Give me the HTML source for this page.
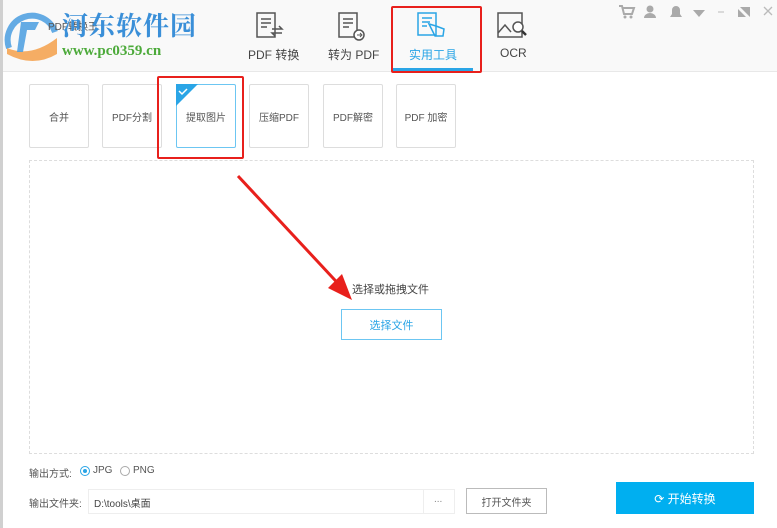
<!DOCTYPE html>
<html><head><meta charset="utf-8"><style>
*{margin:0;padding:0;box-sizing:border-box}
body{width:777px;height:528px;background:#fff;position:relative;overflow:hidden;font-family:"Liberation Sans","Noto Sans CJK SC",sans-serif;color:#333}
.a{position:absolute}
.card{position:absolute;top:84px;width:60px;height:64px;border:1px solid #ddd;border-radius:2px;font-size:10px;color:#555;display:flex;align-items:center;justify-content:center;background:#fff}
.tab{position:absolute;top:46px;font-size:12px;color:#444;text-align:center}
</style></head><body>
<div class="a" style="left:0;top:0;width:3px;height:528px;background:#d0d0d0"></div>
<div class="a" style="left:3px;top:0;width:774px;height:72px;background:#f9f9f9;border-bottom:1px solid #e8e8e8"></div>
<!-- logo -->
<svg class="a" style="left:3px;top:8px" width="56" height="56"><path d="M6 40A24 24 0 1 1 52 24" fill="none" stroke="#4a9ee0" stroke-width="6" opacity=".85"/><path d="M4 40q24 10 50-10v16q-24 14-50 0z" fill="#f5a04a" opacity=".85"/><path d="M18 14h18l-4 8H24l-4 22h-6z" fill="#4a9ee0" opacity=".85"/></svg>
<div class="a" style="left:48px;top:18px;font-size:10px;color:#555">PDF转换王</div>
<div class="a" style="left:62px;top:6px;font-size:26px;font-weight:bold;color:#3a8fd8;font-family:'Liberation Serif','Noto Serif CJK SC',serif;letter-spacing:1px">河东软件园</div>
<div class="a" style="left:62px;top:43px;font-size:15px;font-weight:bold;color:#4caa3a;font-family:'Liberation Serif',serif">www.pc0359.cn</div>
<!-- tabs -->
<svg class="a" style="left:254px;top:11px" width="34" height="30"><rect x="3" y="2" width="18" height="24" fill="none" stroke="#555" stroke-width="1.5"/><path d="M7 8h10M7 12h10M7 16h6M18 18h10l-3-3M28 22h-10l3 3" fill="none" stroke="#555" stroke-width="1.5"/></svg>
<div class="tab" style="left:248px">PDF 转换</div>
<svg class="a" style="left:336px;top:11px" width="30" height="32"><rect x="3" y="2" width="18" height="24" fill="none" stroke="#555" stroke-width="1.5"/><path d="M7 8h10M7 12h10M7 16h6" stroke="#555" stroke-width="1.5"/><circle cx="23" cy="24" r="5" fill="#fff" stroke="#555" stroke-width="1.5"/><path d="M21 24h4M24 22l2 2-2 2" fill="none" stroke="#555"/></svg>
<div class="tab" style="left:328px">转为 PDF</div>
<svg class="a" style="left:415px;top:11px" width="34" height="30"><rect x="3" y="2" width="18" height="22" fill="none" stroke="#2aa5e6" stroke-width="1.5"/><path d="M7 7h10M7 11h8M7 15h5M14 13l6 12h8l1-7-8-3z" fill="none" stroke="#2aa5e6" stroke-width="1.5"/></svg>
<div class="tab" style="left:409px;color:#2aa5e6">实用工具</div>
<div class="a" style="left:393px;top:68px;width:80px;height:3px;background:#2aa5e6"></div>
<div class="a" style="left:391px;top:6px;width:91px;height:67px;border:2px solid #e8201c;border-radius:2px"></div>
<svg class="a" style="left:496px;top:11px" width="34" height="30"><rect x="2" y="2" width="24" height="24" fill="none" stroke="#555" stroke-width="1.5"/><path d="M2 22l7-8 6 7" fill="none" stroke="#555" stroke-width="1.5"/><circle cx="22" cy="16" r="5" fill="#fff" stroke="#555" stroke-width="1.5"/><path d="M26 20l4 4" stroke="#333" stroke-width="2.5"/></svg>
<div class="tab" style="left:500px">OCR</div>
<!-- window controls -->
<svg class="a" style="left:618px;top:4px" width="18" height="16" fill="#aaa"><path d="M1 2h3l2 8h8l2-6H5" fill="none" stroke="#aaa" stroke-width="2"/><circle cx="7" cy="13" r="1.5"/><circle cx="13" cy="13" r="1.5"/></svg>
<svg class="a" style="left:640px;top:4px" width="137" height="16" fill="#aaa"><circle cx="10" cy="5" r="3.5"/><path d="M4 14a6 5 0 0 1 12 0z"/><path d="M30 13h12l-2-3v-4a4 4 0 0 0-8 0v4z"/><path d="M53 3h12M53 6h12l-6 7z"/><path d="M78 8h6" stroke="#bbb"/><path d="M100 3h10v10z"/><path d="M98 5v8h8z"/><path d="M124 3l8 8M132 3l-8 8" stroke="#bbb" stroke-width="1.3"/></svg>
<!-- cards -->
<div class="card" style="left:29px">合并</div>
<div class="card" style="left:102px">PDF分割</div>
<div class="card" style="left:176px;border-color:#6cc6f2">提取图片</div>
<svg class="a" style="left:176px;top:84px" width="22" height="22"><path d="M0 0h22L0 22z" fill="#2aa5e6"/><path d="M3 7l3 3 5-5" fill="none" stroke="#fff" stroke-width="1.5"/></svg>
<div class="card" style="left:249px">压缩PDF</div>
<div class="card" style="left:323px">PDF解密</div>
<div class="card" style="left:396px">PDF 加密</div>
<div class="a" style="left:157px;top:76px;width:87px;height:83px;border:2px solid #e8201c;border-radius:2px"></div>
<!-- drop area -->
<div class="a" style="left:29px;top:160px;width:725px;height:294px;border:1px dashed #ddd"></div>
<div class="a" style="left:352px;top:281px;font-size:11px;color:#444">选择或拖拽文件</div>
<div class="a" style="left:341px;top:309px;width:101px;height:31px;border:1px solid #6cc6f2;color:#2aa5e6;font-size:11px;display:flex;align-items:center;justify-content:center">选择文件</div>
<svg class="a" style="left:230px;top:170px" width="130" height="140"><path d="M8 6L116 122" stroke="#e8201c" stroke-width="3"/><path d="M122 130L98 118 112 104z" fill="#e8201c"/></svg>
<!-- bottom -->
<div class="a" style="left:29px;top:465px;font-size:10px;color:#555">输出方式:</div>
<div class="a" style="left:80px;top:466px;width:10px;height:10px;border:1px solid #2aa5e6;border-radius:50%"><div style="margin:2px;width:4px;height:4px;border-radius:50%;background:#2aa5e6"></div></div>
<div class="a" style="left:93px;top:465px;font-size:10px;color:#555">JPG</div>
<div class="a" style="left:120px;top:466px;width:10px;height:10px;border:1px solid #aaa;border-radius:50%"></div>
<div class="a" style="left:133px;top:465px;font-size:10px;color:#555">PNG</div>
<div class="a" style="left:29px;top:495px;font-size:10px;color:#555">输出文件夹:</div>
<div class="a" style="left:88px;top:489px;width:367px;height:25px;border:1px solid #eee"></div>
<div class="a" style="left:423px;top:489px;width:1px;height:25px;background:#eee"></div>
<div class="a" style="left:94px;top:495px;font-size:10px;color:#444">D:\tools\桌面</div>
<div class="a" style="left:434px;top:494px;font-size:10px;color:#888">...</div>
<div class="a" style="left:466px;top:488px;width:81px;height:26px;border:1px solid #bbb;font-size:10px;color:#555;display:flex;align-items:center;justify-content:center">打开文件夹</div>
<div class="a" style="left:616px;top:482px;width:138px;height:32px;background:#00aff0;color:#fff;font-size:12px;display:flex;align-items:center;justify-content:center">⟳ 开始转换</div>
</body></html>
